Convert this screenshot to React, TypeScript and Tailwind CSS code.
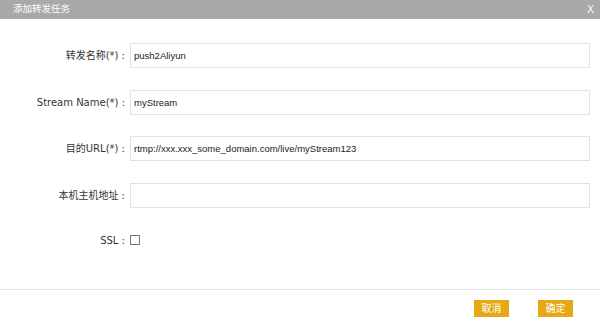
const labelFont = "font-['DejaVu_Sans','Noto_Sans_CJK_SC',sans-serif]";
const inputFont = "font-['Liberation_Sans','Noto_Sans_CJK_SC',sans-serif]";

const fields = [
  { label: "转发名称(*) :", value: "push2Aliyun" },
  { label: "Stream Name(*) :", value: "myStream" },
  { label: "目的URL(*) :", value: "rtmp://xxx.xxx_some_domain.com/live/myStream123" },
  { label: "本机主机地址 :", value: "" },
];

export default function App() {
  return (
    <div className={`${labelFont} flex h-[328px] w-[600px] flex-col bg-white text-[10px] text-[#333]`}>
      {/* 标题栏 */}
      <div className="flex h-[19px] shrink-0 items-center justify-between bg-[#a9a9a9] pl-[13px] pr-[6px] text-white">
        <span className="text-[9.5px]">添加转发任务</span>
        <span className={`${inputFont} text-[10px]`}>X</span>
      </div>

      {/* 表单 */}
      <div className="flex flex-1 flex-col gap-[21.6px] pt-[24px]">
        {fields.map((f) => (
          <div key={f.label} className="flex h-[25px] items-center">
            <label className="w-[125px] shrink-0 whitespace-pre text-right">{f.label}</label>
            <input
              readOnly
              value={f.value}
              className={`${inputFont} ml-[5px] mr-[10px] h-[25px] flex-1 border border-[#e2e2e2] bg-white px-[3px] text-[9.5px] text-[#222] outline-none`}
            />
          </div>
        ))}
        <div className="mt-[5px] flex h-[12px] items-center">
          <label className="w-[125px] shrink-0 text-right">SSL :</label>
          <span className="ml-[5px] h-[10px] w-[10px] border border-[#777] bg-white" />
        </div>
      </div>

      {/* 底部按钮 */}
      <div className="flex h-[39px] shrink-0 items-start justify-end gap-[29px] border-t border-[#e5e5e5] pr-[27px] pt-[10px]">
        <button className="h-[17px] w-[35px] bg-[#e6a817] text-[10px] text-white">取消</button>
        <button className="h-[17px] w-[35px] bg-[#e6a817] text-[10px] text-white">确定</button>
      </div>
    </div>
  );
}
